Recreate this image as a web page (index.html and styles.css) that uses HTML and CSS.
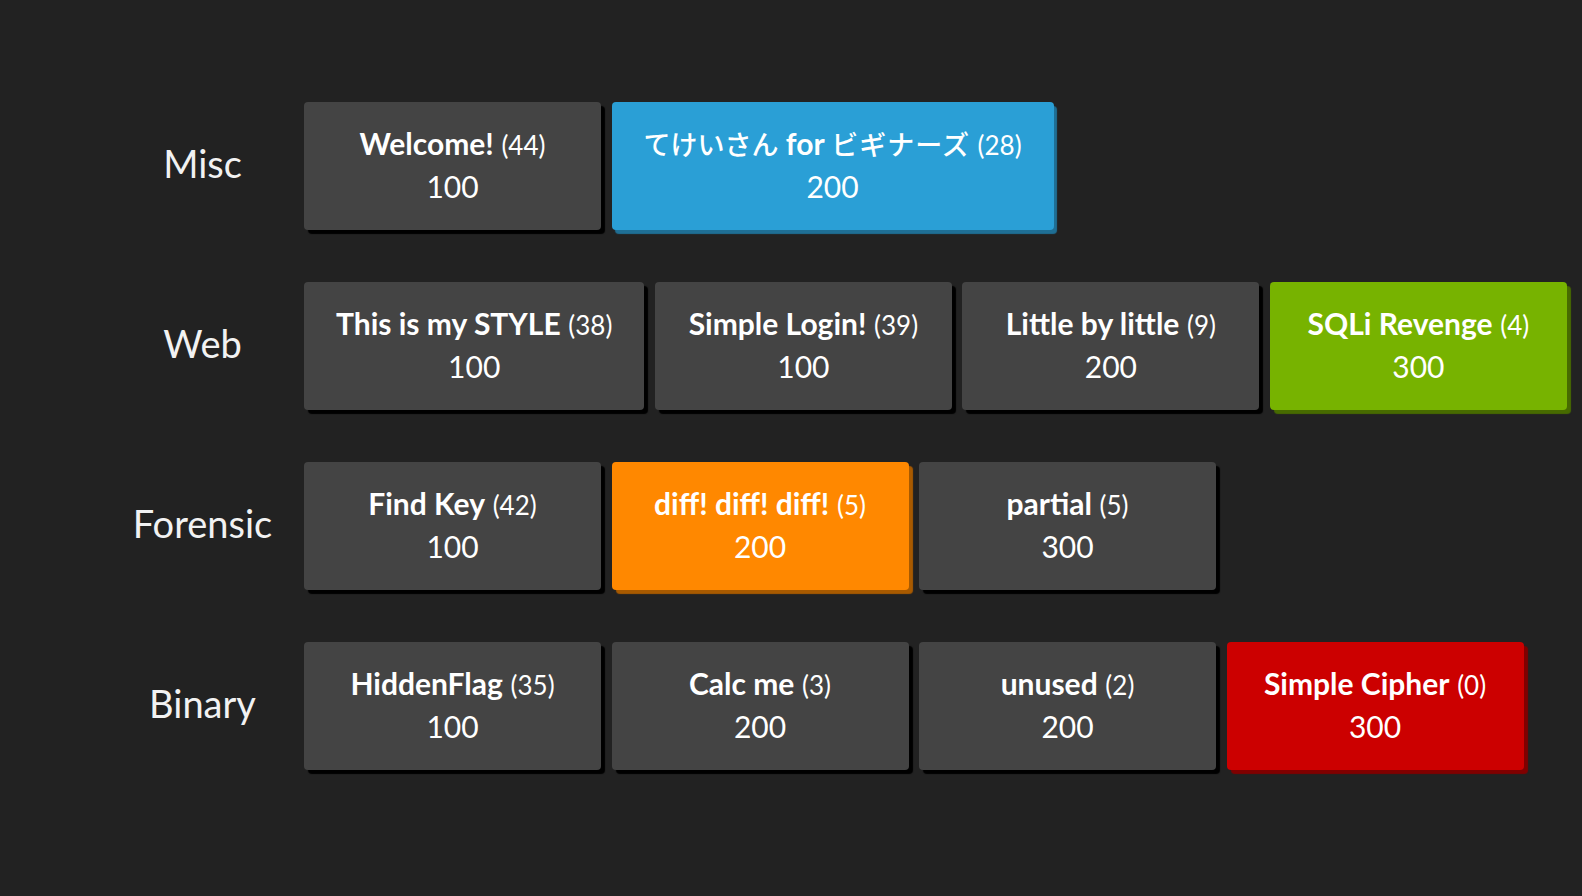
FILE: index.html
```html
<!DOCTYPE html>
<html lang="ja">
<head>
<meta charset="utf-8">
<title>Challenges</title>
<link rel="stylesheet" href="styles.css">
</head>
<body>
<main class="board">
  <section class="row">
    <h2 class="cat">Misc</h2>
    <div class="chals">
      <a class="chal">
        <div class="title"><b>Welcome!</b> <span class="cnt">(44)</span></div>
        <div class="score">100</div>
      </a>
      <a class="chal blue">
        <div class="title"><b><span class="jp">てけいさん</span> for <span class="jp wide">ビギナーズ</span></b> <span class="cnt">(28)</span></div>
        <div class="score">200</div>
      </a>
    </div>
  </section>
  <section class="row">
    <h2 class="cat">Web</h2>
    <div class="chals">
      <a class="chal">
        <div class="title"><b>This is my STYLE</b> <span class="cnt">(38)</span></div>
        <div class="score">100</div>
      </a>
      <a class="chal">
        <div class="title"><b>Simple Login!</b> <span class="cnt">(39)</span></div>
        <div class="score">100</div>
      </a>
      <a class="chal">
        <div class="title"><b>Little by little</b> <span class="cnt">(9)</span></div>
        <div class="score">200</div>
      </a>
      <a class="chal green">
        <div class="title"><b>SQLi Revenge</b> <span class="cnt">(4)</span></div>
        <div class="score">300</div>
      </a>
    </div>
  </section>
  <section class="row">
    <h2 class="cat">Forensic</h2>
    <div class="chals">
      <a class="chal">
        <div class="title"><b>Find Key</b> <span class="cnt">(42)</span></div>
        <div class="score">100</div>
      </a>
      <a class="chal orange">
        <div class="title"><b>diff! diff! diff!</b> <span class="cnt">(5)</span></div>
        <div class="score">200</div>
      </a>
      <a class="chal">
        <div class="title"><b>partial</b> <span class="cnt">(5)</span></div>
        <div class="score">300</div>
      </a>
    </div>
  </section>
  <section class="row">
    <h2 class="cat">Binary</h2>
    <div class="chals">
      <a class="chal">
        <div class="title"><b>HiddenFlag</b> <span class="cnt">(35)</span></div>
        <div class="score">100</div>
      </a>
      <a class="chal">
        <div class="title"><b>Calc me</b> <span class="cnt">(3)</span></div>
        <div class="score">200</div>
      </a>
      <a class="chal">
        <div class="title"><b>unused</b> <span class="cnt">(2)</span></div>
        <div class="score">200</div>
      </a>
      <a class="chal red">
        <div class="title"><b>Simple Cipher</b> <span class="cnt">(0)</span></div>
        <div class="score">300</div>
      </a>
    </div>
  </section>
</main>
</body>
</html>
```
FILE: styles.css
```css
html, body {
  margin: 0;
  padding: 0;
  background: #222222;
  height: 100%;
}
body {
  font-family: "Lato", "Noto Sans CJK JP", sans-serif;
  color: #ffffff;
  overflow: hidden;
}
.board {
  display: flex;
  flex-direction: column;
  gap: 52px;
  padding: 102px 0 0 101px;
}
.row {
  display: flex;
  align-items: center;
}
.cat {
  width: 203px;
  margin: 0 0 6px 0;
  text-align: center;
  font-size: 38px;
  font-weight: 400;
  color: #f2f2f2;
  line-height: 44px;
}
.chals {
  display: flex;
  gap: 10.5px;
}
.chal {
  box-sizing: border-box;
  min-width: 297px;
  height: 128px;
  padding: 21px 32px 25px;
  background: #444444;
  border-radius: 4px;
  box-shadow: 4px 4px 1px #000000;
  text-align: center;
  color: #ffffff;
  white-space: nowrap;
}
.chal.blue { background: #2a9fd6; box-shadow: 3px 4px 1px #1f6f95; }
.chal.green { background: #77b300; box-shadow: 4px 4px 1px #476b00; }
.chal.orange { background: #ff8800; box-shadow: 4px 4px 1px #a85a00; }
.chal.red { background: #cc0000; box-shadow: 4px 4px 1px #800000; }
.title {
  font-size: 30px;
  line-height: 40px;
}
.title b { font-weight: 700; }
.cnt {
  font-size: 26px;
  font-weight: 400;
}
.jp {
  font-family: "Noto Sans CJK JP", sans-serif;
  font-weight: 500;
  font-size: 27px;
}
.jp.wide {
  letter-spacing: 1px;
}
.score {
  font-size: 30px;
  line-height: 42px;
}
```
